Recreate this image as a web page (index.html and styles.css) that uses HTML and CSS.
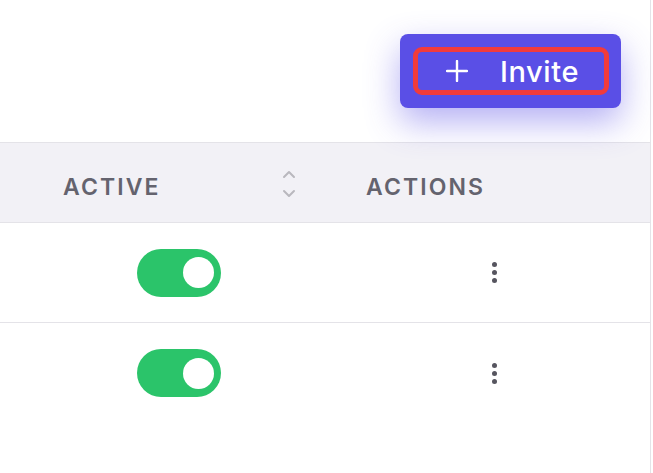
FILE: index.html
```html
<!DOCTYPE html>
<html lang="en">
<head>
  <meta charset="UTF-8" />
  <title>Users</title>
  <link rel="stylesheet" href="styles.css">
</head>
<body>
  <div class="panel">
    <div class="toolbar">
      <button class="invite-btn">
        <span class="invite-inner">
          <svg class="plus" width="22" height="22" viewBox="0 0 22 22">
            <path d="M11 1 V21 M1 11 H21" stroke="#fff" stroke-width="2.4" stroke-linecap="round"/>
          </svg>
          Invite
        </span>
      </button>
    </div>

    <div class="table">
      <div class="row head">
        <div class="cell col-active">
          <span>ACTIVE</span>
          <svg class="sort" width="16" height="30" viewBox="0 0 16 30">
            <path d="M3 8 L8 3 L13 8" fill="none" stroke="#b9b8be" stroke-width="2" stroke-linecap="round" stroke-linejoin="round"/>
            <path d="M3 22 L8 27 L13 22" fill="none" stroke="#b9b8be" stroke-width="2" stroke-linecap="round" stroke-linejoin="round"/>
          </svg>
        </div>
        <div class="cell col-actions">ACTIONS</div>
      </div>

      <div class="row">
        <div class="cell col-active"><span class="toggle on"><span class="knob"></span></span></div>
        <div class="cell col-actions"><span class="dots"><i></i><i></i><i></i></span></div>
      </div>

      <div class="row last">
        <div class="cell col-active"><span class="toggle on"><span class="knob"></span></span></div>
        <div class="cell col-actions"><span class="dots"><i></i><i></i><i></i></span></div>
      </div>
    </div>
  </div>
</body>
</html>
```

FILE: styles.css
```css
body {
  margin: 0;
  background: #fff;
  font-family: 'Inter', 'Lato', sans-serif;
}
.panel {
  width: 650px;
  height: 473px;
  border-right: 1px solid #e4e3e8;
  box-sizing: content-box;
}
.toolbar {
  height: 142px;
  display: flex;
  justify-content: flex-end;
  align-items: flex-start;
  padding-right: 29px;
  box-sizing: border-box;
  padding-top: 34px;
}
.invite-btn {
  width: 221px;
  height: 74px;
  background: #5a4fe6;
  border: none;
  border-radius: 8px;
  padding: 13px 12px 13px 13px;
  box-sizing: border-box;
  box-shadow: 0 14px 34px rgba(90, 79, 230, 0.45);
  cursor: pointer;
}
.invite-inner {
  display: flex;
  align-items: center;
  height: 100%;
  border: 5px solid #f23b3b;
  border-radius: 9px;
  box-sizing: border-box;
  color: #fff;
  font-family: 'Inter', sans-serif;
  font-size: 29px;
  font-weight: 500;
  letter-spacing: 0.6px;
  padding-left: 28px;
}
.plus {
  margin-right: 32px;
}
.row {
  display: grid;
  grid-template-columns: 330px 1fr;
  height: 100px;
  border-bottom: 1px solid #e4e3e8;
  box-sizing: border-box;
  align-items: center;
}
.row.last {
  border-bottom: none;
}
.row.head {
  height: 81px;
  background: #f2f1f6;
  border-top: 1px solid #e4e3e8;
  padding-top: 8px;
}
.cell {
  display: flex;
  align-items: center;
}
.head .cell {
  font-size: 23px;
  font-weight: 600;
  letter-spacing: 2.1px;
  color: #64636e;
}
.head .col-active {
  padding-left: 63px;
}
.sort {
  margin-left: auto;
  margin-right: 33px;
  margin-top: -6px;
}
.head .col-actions {
  padding-left: 36px;
}
.col-active {
  padding-left: 137px;
}
.col-actions {
  padding-left: 162px;
}
.toggle {
  width: 84px;
  height: 48px;
  border-radius: 24px;
  background: #dddce2;
  display: flex;
  align-items: center;
  justify-content: flex-start;
  padding: 0 7px;
  box-sizing: border-box;
}
.toggle.on {
  background: #2bc46a;
  justify-content: flex-end;
}
.knob {
  width: 31px;
  height: 31px;
  border-radius: 50%;
  background: #fff;
}
.dots {
  display: flex;
  flex-direction: column;
  gap: 3px;
}
.dots i {
  width: 5px;
  height: 5px;
  border-radius: 50%;
  background: #56555f;
}
```
